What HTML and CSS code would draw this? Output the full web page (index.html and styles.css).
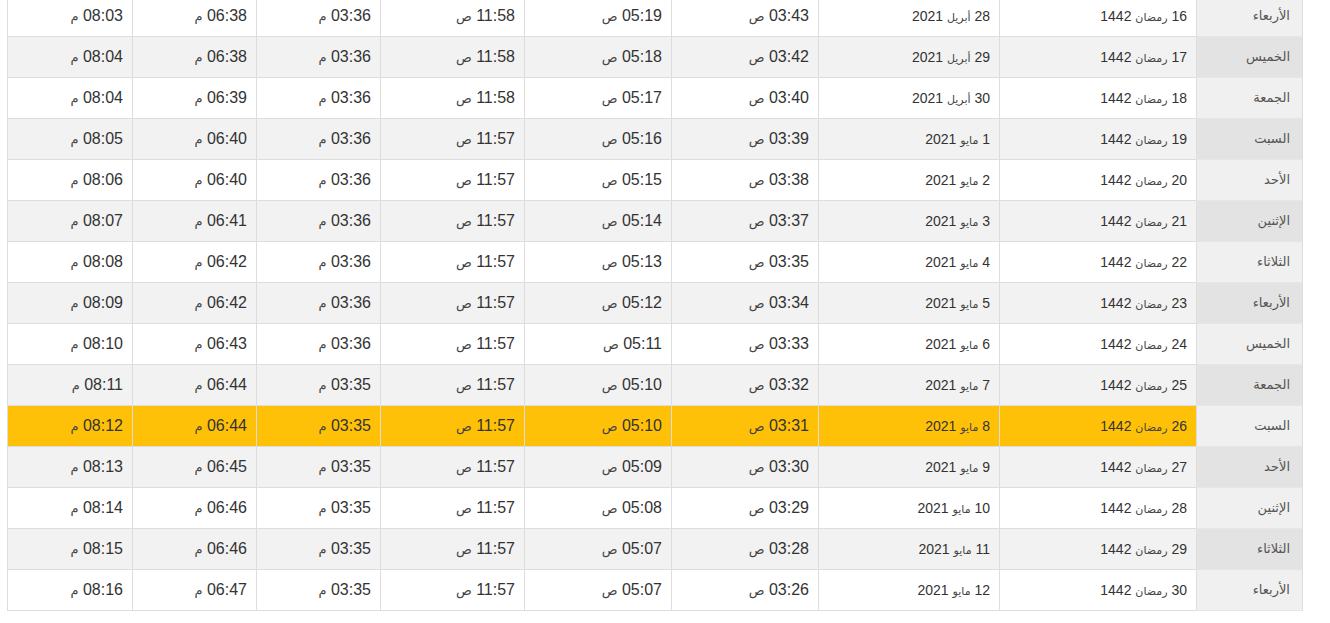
FILE: index.html
```html
<!DOCTYPE html>
<html lang="ar" dir="rtl">
<head>
<meta charset="utf-8">
<title>مواقيت الصلاة</title>
<link rel="stylesheet" href="styles.css">
</head>
<body>
<table class="times">
<colgroup>
<col class="c-day"><col class="c-hijri"><col class="c-greg"><col class="c-fajr"><col class="c-sun"><col class="c-dhuhr"><col class="c-asr"><col class="c-magh"><col class="c-isha">
</colgroup>
<tbody>
<tr><th class="day">الأربعاء</th><td class="date">16 <span class="ar">رمضان</span> 1442</td><td class="date">28 <span class="ar">أبريل</span> 2021</td><td>03:43 <span class="ar">ص</span></td><td>05:19 <span class="ar">ص</span></td><td>11:58 <span class="ar">ص</span></td><td>03:36 <span class="ar">م</span></td><td>06:38 <span class="ar">م</span></td><td>08:03 <span class="ar">م</span></td></tr>
<tr><th class="day">الخميس</th><td class="date">17 <span class="ar">رمضان</span> 1442</td><td class="date">29 <span class="ar">أبريل</span> 2021</td><td>03:42 <span class="ar">ص</span></td><td>05:18 <span class="ar">ص</span></td><td>11:58 <span class="ar">ص</span></td><td>03:36 <span class="ar">م</span></td><td>06:38 <span class="ar">م</span></td><td>08:04 <span class="ar">م</span></td></tr>
<tr><th class="day">الجمعة</th><td class="date">18 <span class="ar">رمضان</span> 1442</td><td class="date">30 <span class="ar">أبريل</span> 2021</td><td>03:40 <span class="ar">ص</span></td><td>05:17 <span class="ar">ص</span></td><td>11:58 <span class="ar">ص</span></td><td>03:36 <span class="ar">م</span></td><td>06:39 <span class="ar">م</span></td><td>08:04 <span class="ar">م</span></td></tr>
<tr><th class="day">السبت</th><td class="date">19 <span class="ar">رمضان</span> 1442</td><td class="date">1 <span class="ar">مايو</span> 2021</td><td>03:39 <span class="ar">ص</span></td><td>05:16 <span class="ar">ص</span></td><td>11:57 <span class="ar">ص</span></td><td>03:36 <span class="ar">م</span></td><td>06:40 <span class="ar">م</span></td><td>08:05 <span class="ar">م</span></td></tr>
<tr><th class="day">الأحد</th><td class="date">20 <span class="ar">رمضان</span> 1442</td><td class="date">2 <span class="ar">مايو</span> 2021</td><td>03:38 <span class="ar">ص</span></td><td>05:15 <span class="ar">ص</span></td><td>11:57 <span class="ar">ص</span></td><td>03:36 <span class="ar">م</span></td><td>06:40 <span class="ar">م</span></td><td>08:06 <span class="ar">م</span></td></tr>
<tr><th class="day">الإثنين</th><td class="date">21 <span class="ar">رمضان</span> 1442</td><td class="date">3 <span class="ar">مايو</span> 2021</td><td>03:37 <span class="ar">ص</span></td><td>05:14 <span class="ar">ص</span></td><td>11:57 <span class="ar">ص</span></td><td>03:36 <span class="ar">م</span></td><td>06:41 <span class="ar">م</span></td><td>08:07 <span class="ar">م</span></td></tr>
<tr><th class="day">الثلاثاء</th><td class="date">22 <span class="ar">رمضان</span> 1442</td><td class="date">4 <span class="ar">مايو</span> 2021</td><td>03:35 <span class="ar">ص</span></td><td>05:13 <span class="ar">ص</span></td><td>11:57 <span class="ar">ص</span></td><td>03:36 <span class="ar">م</span></td><td>06:42 <span class="ar">م</span></td><td>08:08 <span class="ar">م</span></td></tr>
<tr><th class="day">الأربعاء</th><td class="date">23 <span class="ar">رمضان</span> 1442</td><td class="date">5 <span class="ar">مايو</span> 2021</td><td>03:34 <span class="ar">ص</span></td><td>05:12 <span class="ar">ص</span></td><td>11:57 <span class="ar">ص</span></td><td>03:36 <span class="ar">م</span></td><td>06:42 <span class="ar">م</span></td><td>08:09 <span class="ar">م</span></td></tr>
<tr><th class="day">الخميس</th><td class="date">24 <span class="ar">رمضان</span> 1442</td><td class="date">6 <span class="ar">مايو</span> 2021</td><td>03:33 <span class="ar">ص</span></td><td>05:11 <span class="ar">ص</span></td><td>11:57 <span class="ar">ص</span></td><td>03:36 <span class="ar">م</span></td><td>06:43 <span class="ar">م</span></td><td>08:10 <span class="ar">م</span></td></tr>
<tr><th class="day">الجمعة</th><td class="date">25 <span class="ar">رمضان</span> 1442</td><td class="date">7 <span class="ar">مايو</span> 2021</td><td>03:32 <span class="ar">ص</span></td><td>05:10 <span class="ar">ص</span></td><td>11:57 <span class="ar">ص</span></td><td>03:35 <span class="ar">م</span></td><td>06:44 <span class="ar">م</span></td><td>08:11 <span class="ar">م</span></td></tr>
<tr class="today"><th class="day">السبت</th><td class="date">26 <span class="ar">رمضان</span> 1442</td><td class="date">8 <span class="ar">مايو</span> 2021</td><td>03:31 <span class="ar">ص</span></td><td>05:10 <span class="ar">ص</span></td><td>11:57 <span class="ar">ص</span></td><td>03:35 <span class="ar">م</span></td><td>06:44 <span class="ar">م</span></td><td>08:12 <span class="ar">م</span></td></tr>
<tr><th class="day">الأحد</th><td class="date">27 <span class="ar">رمضان</span> 1442</td><td class="date">9 <span class="ar">مايو</span> 2021</td><td>03:30 <span class="ar">ص</span></td><td>05:09 <span class="ar">ص</span></td><td>11:57 <span class="ar">ص</span></td><td>03:35 <span class="ar">م</span></td><td>06:45 <span class="ar">م</span></td><td>08:13 <span class="ar">م</span></td></tr>
<tr><th class="day">الإثنين</th><td class="date">28 <span class="ar">رمضان</span> 1442</td><td class="date">10 <span class="ar">مايو</span> 2021</td><td>03:29 <span class="ar">ص</span></td><td>05:08 <span class="ar">ص</span></td><td>11:57 <span class="ar">ص</span></td><td>03:35 <span class="ar">م</span></td><td>06:46 <span class="ar">م</span></td><td>08:14 <span class="ar">م</span></td></tr>
<tr><th class="day">الثلاثاء</th><td class="date">29 <span class="ar">رمضان</span> 1442</td><td class="date">11 <span class="ar">مايو</span> 2021</td><td>03:28 <span class="ar">ص</span></td><td>05:07 <span class="ar">ص</span></td><td>11:57 <span class="ar">ص</span></td><td>03:35 <span class="ar">م</span></td><td>06:46 <span class="ar">م</span></td><td>08:15 <span class="ar">م</span></td></tr>
<tr><th class="day">الأربعاء</th><td class="date">30 <span class="ar">رمضان</span> 1442</td><td class="date">12 <span class="ar">مايو</span> 2021</td><td>03:26 <span class="ar">ص</span></td><td>05:07 <span class="ar">ص</span></td><td>11:57 <span class="ar">ص</span></td><td>03:35 <span class="ar">م</span></td><td>06:47 <span class="ar">م</span></td><td>08:16 <span class="ar">م</span></td></tr>
</tbody>
</table>
</body>
</html>
```
FILE: styles.css
```css
html, body {
  margin: 0;
  padding: 0;
  background: #ffffff;
}
body {
  font-family: "Liberation Sans", Arial, "DejaVu Sans", sans-serif;
  color: #333333;
}
.times {
  direction: rtl;
  width: 1295px;
  margin: -5px 27px 0 8px;
  border-collapse: collapse;
  table-layout: fixed;
  border: 1px solid #dddddd;
}
.c-day { width: 106px; }
.c-hijri { width: 197px; }
.c-greg { width: 181px; }
.c-fajr { width: 147px; }
.c-sun { width: 147px; }
.c-dhuhr { width: 144px; }
.c-asr { width: 124px; }
.c-magh { width: 124px; }
.c-isha { width: 125px; }

.times tr {
  height: 41px;
}
.times td, .times th {
  border: 1px solid #dddddd;
  padding: 0 9px;
  line-height: 16px;
  text-align: right;
  font-size: 16px;
  font-weight: normal;
  white-space: nowrap;
  vertical-align: middle;
}
.times td.date {
  font-size: 14px;
}
.times th.day {
  font-size: 13px;
  padding-right: 12px;
  color: #555555;
  background: #f0f0f0;
  border-top-color: #e6e6e6;
  border-bottom-color: #e6e6e6;
}
.times tr:nth-child(even) td {
  background: #f2f2f2;
}
.times tr:nth-child(even) th.day {
  background: #e3e3e3;
}
.times tr.today td {
  background: #ffc107;
}
.ar {
  font-size: 13px;
  line-height: 12px;
  color: #444444;
}
.date .ar {
  font-size: 11px;
}
```
